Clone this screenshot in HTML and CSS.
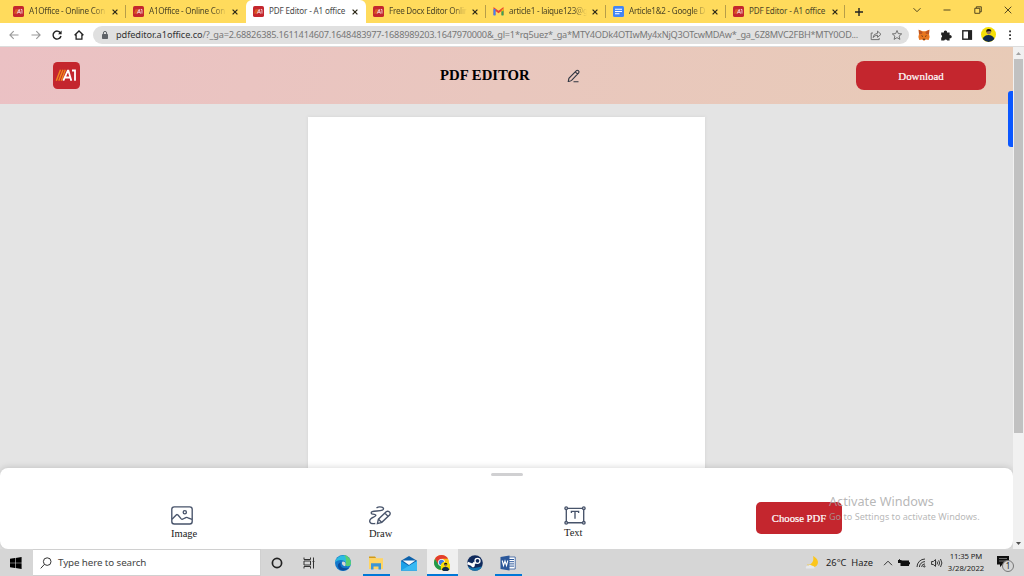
FILE: index.html
```html
<!DOCTYPE html>
<html lang="en">
<head>
<meta charset="utf-8">
<title>PDF Editor - A1 office</title>
<link rel="stylesheet" href="styles.css">
</head>
<body>
<svg class="defs" width="0" height="0">
  <symbol id="a1" viewBox="0 0 27 27">
    <rect width="27" height="27" rx="4.5" fill="#c4262e"/>
    <path d="M3.3 18.7 7.5 7.8M5.8 18.7 10 7.8M8.3 18.7 12.3 7.8" stroke="#f08a1c" stroke-width="1.4" fill="none"/>
    <path d="M10.3 18.7 14.8 8.6H15.4L18.3 18.7M12 15.5H17.3M19 8.5H22V18.7" stroke="#fff" stroke-width="1.8" fill="none"/>
  </symbol>
  <symbol id="close" viewBox="0 0 6 6"><path d="M.6.6 5.4 5.4M5.4.6.6 5.4" stroke="#2b2718" stroke-width="1.25"/></symbol>
  <symbol id="face" viewBox="0 0 14 14">
    <circle cx="7" cy="7" r="7" fill="#f4de08"/>
    <path d="M1.6 11.3Q3 7.5 7 7.5t5.5 3.8A7 7 0 0 1 1.6 11.3Z" fill="#10284c"/>
    <circle cx="7.2" cy="5" r="2" fill="#9b765a"/><path d="M5 5Q4.500 1.700 7.3 1.900T9.500 4.6L8.6 3.800 6.200 4Z" fill="#111"/>
  </symbol>
</svg>
<div class="screen">
  <div class="tabs">
    <div class="tab"><svg class="fav"><use href="#a1"/></svg><span class="title fade">A1Office - Online Con</span><svg class="x"><use href="#close"/></svg></div>
    <div class="tab sep"><svg class="fav"><use href="#a1"/></svg><span class="title fade">A1Office - Online Con</span><svg class="x"><use href="#close"/></svg></div>
    <div class="tab active"><svg class="fav"><use href="#a1"/></svg><span class="title">PDF Editor - A1 office</span><svg class="x"><use href="#close"/></svg></div>
    <div class="tab"><svg class="fav"><use href="#a1"/></svg><span class="title fade">Free Docx Editor Onlin</span><svg class="x"><use href="#close"/></svg></div>
    <div class="tab sep"><svg class="fav" viewBox="0 0 22 22"><path d="M3 18V6l8 6 8-6v12" fill="none" stroke="#ea4335" stroke-width="4"/><path d="M3 19V6" stroke="#4285f4" stroke-width="4"/><path d="M19 19V9" stroke="#34a853" stroke-width="4"/><path d="M17 8l4-3v4l-4 3Z" fill="#fbbc04"/></svg><span class="title fade">article1 - laique123@g</span><svg class="x"><use href="#close"/></svg></div>
    <div class="tab sep"><svg class="fav" viewBox="0 0 22 22"><rect width="22" height="22" rx="3" fill="#4285f4"/><path d="M4 6.5h14M4 11h14M4 15.5h9" stroke="#fff" stroke-width="2"/></svg><span class="title fade">Article1&amp;2 - Google D</span><svg class="x"><use href="#close"/></svg></div>
    <div class="tab sep"><svg class="fav"><use href="#a1"/></svg><span class="title">PDF Editor - A1 office</span><svg class="x"><use href="#close"/></svg></div>
    <div class="newtab"><svg width="8" height="8" viewBox="0 0 8 8"><path d="M4 0v8M0 4h8" stroke="#222" stroke-width="1.4"/></svg></div>
    <div class="winbtns">
      <svg viewBox="0 0 10 10"><path d="M1.5 3.2 5 6.7 8.5 3.2"/></svg>
      <svg viewBox="0 0 10 10"><path d="M1.5 5h7"/></svg>
      <svg viewBox="0 0 10 10"><path d="M1.8 3.3h5v5h-5ZM3.3 3V1.8h5v5H7"/></svg>
      <svg viewBox="0 0 10 10"><path d="M1.7 1.7l6.6 6.6M8.3 1.7 1.7 8.3"/></svg>
    </div>
  </div>

  <div class="toolbar">
    <div class="nav">
      <svg class="dim" viewBox="0 0 12 12"><path d="M10.5 6H2M5.7 2.2 1.9 6l3.8 3.8"/></svg>
      <svg class="dim" viewBox="0 0 12 12"><path d="M1.5 6H10M6.3 2.2 10.1 6 6.3 9.8"/></svg>
      <svg viewBox="0 0 12 12"><path d="M9.4 3.8A4 4 0 1 0 10 7" stroke-width="1.4"/><path d="M10.6 1.6v3.6H7Z" fill="#222" stroke="none"/></svg>
      <svg viewBox="0 0 12 12"><path d="M1.6 6.2 6 2l4.4 4.2M3.1 5.4v4.8h5.8V5.4" stroke-width="1.3"/></svg>
    </div>
    <div class="url">
      <svg class="lock" viewBox="0 0 6 8"><rect y="3" width="6" height="5" rx=".7" fill="#5f6368"/><path d="M1.4 3.4V2a1.6 1.6 0 0 1 3.2 0v1.4" fill="none" stroke="#5f6368"/></svg>
      <span class="addr"><b>pdfeditor.a1office.co</b>/?_ga=2.68826385.1611414607.1648483977-1688989203.1647970000&amp;_gl=1*rq5uez*_ga*MTY4ODk4OTIwMy4xNjQ3OTcwMDAw*_ga_6Z8MVC2FBH*MTY0OD...</span>
      <svg class="act" viewBox="0 0 12 12"><path d="M3 4H1.2v6.6h8V9M3 8.5Q3.5 4.6 7.5 4.3V2.1L11 5.3 7.5 8.3V6.2Q5 6.2 3 8.5Z"/></svg>
      <svg class="act star" viewBox="0 0 12 12"><path d="M6 1.5 7.3 4.6 10.7 4.9 8.1 7.1 8.9 10.4 6 8.6 3.1 10.4 3.9 7.1 1.3 4.9 4.7 4.6Z"/></svg>
    </div>
    <div class="exts">
      <svg viewBox="0 0 12 12"><path d="M.7.7 4.6 2.2h2.8L11.3.7 11 5l.6 3-.9 3-3-.6-1 1H5.3l-1-1-3 .6-.9-3L1 5Z" fill="#e8761f"/><path d="M3 6.2 5 7 4.5 8ZM9 6.2 7 7 7.5 8ZM4.8 9.7h2.4v1H4.8Z" fill="#51301c"/><path d="M.7.7 4.6 3 4 5 1 5ZM11.3.7 7.4 3 8 5 11 5Z" fill="#bd5522"/></svg>
      <svg viewBox="0 0 12 12"><path d="M1.2 3.5h2.7a1.6 1.6 0 1 1 3.1 0h2.6v2.7a1.6 1.6 0 1 1 0 3v2.3H7.2a1.6 1.6 0 0 0-3 0h-3V8.8a1.6 1.6 0 0 0 0-2.9Z" fill="#222"/></svg>
      <svg viewBox="0 0 12 12"><rect x="1.8" y="1.8" width="8.6" height="8.4" fill="none" stroke="#222" stroke-width="1.4"/><path d="M7 2h3.3v8H7Z" fill="#222"/></svg>
      <svg class="avatar"><use href="#face"/></svg>
      <svg viewBox="0 0 12 12"><path d="M5.2 1.5h1.7v1.7H5.2ZM5.2 5.2h1.7v1.7H5.2ZM5.2 8.9h1.7v1.7H5.2Z" fill="#222"/></svg>
    </div>
  </div>

  <div class="viewport">
    <div class="page">
      <header class="head">
        <svg class="logo"><use href="#a1"/></svg>
        <h1>PDF EDITOR</h1>
        <svg class="pencil" viewBox="0 0 14 14"><path d="M1.3 12.4 1.9 9.3 9.2 1.8Q10.2.8 11.4 1.7 12.6 2.8 11.7 4L4.6 11.4Q3.2 12.5 1.3 12.4ZM8.2 2.9l2.5 2.3M6.500 12.700h5" fill="none" stroke="#303642" stroke-width="1.1"/></svg>
        <button class="btn download">Download</button>
      </header>
      <main class="work"><div class="sheet"></div></main>
      <div class="feedback"></div>
      <section class="panel">
        <div class="grip"></div>
        <div class="tools">
          <div class="tool image"><svg viewBox="0 0 22 19"><rect x=".8" y=".8" width="20.4" height="17.2" rx="2.5"/><path d="M1 13.2 5.2 9Q6.2 8 7.2 9.2L10 12.6Q11 13.7 12 13L14.8 11.6Q16 11 17 11.8L21 13.3"/><circle cx="13.8" cy="6.2" r="1.6"/></svg><span>Image</span></div>
          <div class="tool draw"><svg viewBox="0 0 22 19"><path d="M7.5 1.8Q10 .3 12.8 1.2 16 2.4 13.3 4.2C10.5 5.4 6 4.6 3.2 5.6 1.5 6.5 2.2 8 4 8.2 7 8.5 8 9.4 5 10.9 1.5 12.5.2 13.7.8 15.7 1.4 17.8 4 17.9 6.3 17.5M8.4 17.6 9.4 13.2 17.2 5.8Q18.6 4.7 20.2 5.8T20.8 8.8L12.8 16.3ZM16 7.2l3.1 3.2M9.5 13.3l3.1 3"/></svg><span>Draw</span></div>
          <div class="tool text"><svg viewBox="0 0 22 19"><path d="M3 2.3h16M3 16.7h16M2.3 3v13M19.7 3v13M7.4 7V5.4h7.2V7M11 5.4v7.4"/><circle cx="2.2" cy="2.2" r="1.3"/><circle cx="19.8" cy="2.2" r="1.3"/><circle cx="2.2" cy="16.8" r="1.3"/><circle cx="19.8" cy="16.8" r="1.3"/></svg><span>Text</span></div>
          <button class="btn choose">Choose PDF</button>
        </div>
      </section>
      <div class="watermark"><p class="w1">Activate Windows</p><p class="w2">Go to Settings to activate Windows.</p></div>
    </div>
    <div class="scroll">
      <svg width="7" height="4" viewBox="0 0 7 4"><path d="M1 4 3.5 1 6 4Z" fill="#a3a3a3"/></svg>
      <div class="thumb"></div>
      <svg class="down" width="7" height="4" viewBox="0 0 7 4"><path d="M1 0 3.5 3 6 0Z" fill="#505050"/></svg>
    </div>
  </div>

  <div class="taskbar">
    <div class="start"><svg width="12" height="12" viewBox="0 0 12 12"><path d="M0 1.7 5 1V5.7H0ZM5.6.9 11.6 0V5.7H5.6ZM0 6.3H5V11L0 10.3ZM5.6 6.3H11.6V12L5.6 11.1Z"/></svg></div>
    <div class="search"><svg width="12" height="12" viewBox="0 0 12 12"><circle cx="7.2" cy="4.6" r="3.8"/><path d="M4.4 7.4.7 11.4"/></svg><span>Type here to search</span></div>
    <div class="apps">
      <div class="app"><svg viewBox="0 0 16 16"><circle cx="8" cy="8" r="4.6" fill="none" stroke="#222" stroke-width="1.7"/></svg></div>
      <div class="app view"><svg viewBox="0 0 16 16"><path d="M3 2.5v2h6.5v-2M3 13.5v-2h6.5v2M3 6h6.5v4H3ZM12.5 2.5v11M11.6 6.5h1.8" fill="none" stroke="#333" stroke-width="1"/></svg></div>
      <div class="app"><svg viewBox="0 0 16 16"><circle cx="8" cy="8" r="8" fill="#1478cb"/><path d="M.1 7.4A8 8 0 0 1 16 8c.1 3-3 3.8-5.4 2.8-1-.6.4-1.1.2-2.7C10.3 5 4 3.6.1 7.4Z" fill="#2bbce0"/><path d="M9 .1A8 8 0 0 1 16 8c.1 3-3 3.8-5.4 2.8-1-.6.4-1.1.2-2.7C10.5 5.5 12 3 9 .1Z" fill="#58cf70"/><path d="M6 7.5C4 11 7.5 14.7 13.8 12.7 11 16.5 4 16.5 3 11.5 2.6 9 4 7.6 6 7.5Z" fill="#0b4c9c"/><path d="M7.8 6.6c2 0 3 1.3 2.8 2.6-.5 1-.8 1.3 0 1.9-3 .4-4.9-3-2.8-4.5Z" fill="#d6d6d6"/></svg></div>
      <div class="app open"><svg viewBox="0 0 16 16"><path d="M1 1.5h6l1.3 1.8H1Z" fill="#d39b16"/><path d="M1 3.2h14V14H1Z" fill="#ffd563"/><path d="M3 14.5V8.3h10v6.2h-2.5v-3h-5v3Z" fill="#3c95d6"/></svg></div>
      <div class="app"><svg viewBox="0 0 16 16"><path d="M0 5.8 8 1l8 4.8V15.5H0Z" fill="#0d62ab"/><path d="M1.5 5.5h13L8 10Z" fill="#f2f7fb"/><path d="M0 6 8 11 16 6v9.5H0Z" fill="#1ba1e8"/><path d="M0 15.5 8 10.8 16 6v9.5Z" fill="#38b9f3"/></svg></div>
      <div class="app open current"><svg viewBox="0 0 16 16"><circle cx="7.5" cy="7.5" r="7.5" fill="#fbc116"/><path d="M1 3.8A7.5 7.5 0 0 1 14 3.8H7.5L4.3 9.4Z" fill="#e33b2e"/><path d="M1 3.8 4.3 9.3 7.5 11 6.7 15A7.5 7.5 0 0 1 1 3.8Z" fill="#229a4c"/><circle cx="7.5" cy="7.5" r="3.5" fill="#fff"/><circle cx="7.5" cy="7.5" r="2.7" fill="#3b7de9"/><use href="#face" x="6.5" y="6.5" width="10" height="10"/></svg></div>
      <div class="app"><svg viewBox="0 0 16 16"><circle cx="8" cy="8" r="7.8" fill="#102a5c"/><path d="M1 11.5 6 13.3 15 11.5A7.8 7.8 0 0 1 1 11.5Z" fill="#1675ae"/><path d="M.5 8 5.5 10 8 7.5" stroke="#fff" stroke-width="2.5" fill="none"/><circle cx="10.5" cy="5.8" r="2.5" fill="#102a5c" stroke="#fff" stroke-width="1.3"/><circle cx="6" cy="10.6" r="1.8" fill="#fff"/></svg></div>
      <div class="app open"><svg viewBox="0 0 16 16"><path d="M8 2h7.2v12H8Z" fill="#fff" stroke="#2b579a" stroke-width=".8"/><path d="M9 4.5h5M9 6.7h5M9 8.9h5M9 11.1h5" stroke="#2b579a"/><path d="M.5 2 9.5.5v15L.5 14Z" fill="#2b579a"/><path d="M2.2 5.5 3.5 10.5 5 6 6.5 10.5 7.8 5.5" fill="none" stroke="#fff" stroke-width="1.1"/></svg></div>
    </div>
    <div class="tray">
      <svg class="moon" width="15" height="13" viewBox="0 0 15 13"><path d="M8 0C13 2 15 8 10.5 10.5 7 12 3.5 10.8 2 8.500 6.500 9.500 9.500 5 8 0Z" fill="#fbc61c"/><path d="M1 12.4Q.2 10 3 9.7 5 7.7 7 9.7 9.5 9.5 9.5 12.4Z" fill="#e6e8ec"/></svg>
      <span class="temp">26°C&nbsp; Haze</span>
      <svg class="chev" width="10" height="6" viewBox="0 0 10 6"><path d="M1 5.2 5 1.2 9 5.2"/></svg>
      <svg class="bat" width="12" height="8" viewBox="0 0 12 8"><path d="M2.5 1.500H11v5.500H2.5ZM11 3.2h1v2h-1ZM0 1h3.5v3H0ZM1 0h.8v2H1Z" fill="#111"/></svg>
      <svg class="wifi" width="10" height="10" viewBox="0 0 10 10"><path d="M1 9A8 8 0 0 1 9 1M3.4 9A5.6 5.6 0 0 1 9 3.6M5.6 9A3.4 3.4 0 0 1 9 5.9"/><circle cx="8.3" cy="8.4" r=".7"/></svg>
      <svg class="vol" width="12" height="10" viewBox="0 0 12 10"><path d="M.6 3.5h1.7L4.5 1.6v6.8L2.3 6.5H.6ZM6 3.5Q7 5 6 6.5M7.7 2.3Q9.5 5 7.7 7.7M9.5 1Q12.3 5 9.5 9"/></svg>
      <div class="clock"><span class="time">11:35 PM</span><span>3/28/2022</span></div>
      <div class="note"><svg width="12" height="11" viewBox="0 0 12 11"><path d="M0 0h12v8.5H5.5L3 11V8.5H0Z" fill="#111"/><path d="M2 2.5h8M2 5h8" stroke="#999" stroke-width=".7"/></svg><span class="count">1</span></div>
    </div>
  </div>
</div>
</body>
</html>
```

FILE: styles.css
```css
* { box-sizing: border-box; }
body { margin: 0; overflow: hidden; font-family: "Noto Sans", "Open Sans", sans-serif; }
.defs { position: absolute; }
.screen { width: 1024px; height: 576px; display: flex; flex-direction: column; }
p, h1 { margin: 0; }
svg { display: block; flex: none; }

.tabs { height: 23px; background: #ffdb5c; display: flex; padding-left: 5px; }
.tab { width: 120px; height: 23px; display: flex; align-items: center; padding: 0 8px; position: relative; flex: none; }
.tab.sep::before { content: ""; position: absolute; left: 0; top: 5px; width: 1px; height: 13px; background: #b79e48; }
.tab.active { background: #fff; border-radius: 6px 6px 0 0; margin-left: 1px; margin-right: -1px; padding-left: 7px; }
.fav { width: 11px; height: 11px; margin-right: 5px; }
.title { width: 78px; flex: none; height: 13px; line-height: 12px; font-size: 8.1px; color: #4e4727; white-space: nowrap; letter-spacing: -.16px; }
.fade { letter-spacing: -.25px; -webkit-mask-image: linear-gradient(90deg, #000 82%, transparent); mask-image: linear-gradient(90deg, #000 82%, transparent); }
.active .title { color: #4a4a4a; }
.x { width: 6px; height: 6px; margin-left: 5px; }
.newtab { width: 28px; display: flex; align-items: center; padding-left: 10px; border-left: 1px solid #b79e48; height: 13px; margin: 5px 0 0 -1px; }
.winbtns { margin-left: auto; display: flex; gap: 20.5px; padding: 5px 11px 0 0; }
.winbtns svg { width: 10px; height: 10px; fill: none; stroke: #42391b; stroke-width: .9; }

.toolbar { height: 24px; background: #fff; border-bottom: 1px solid #dcdcdc; display: flex; align-items: center; padding: 0 8px; }
.nav { display: flex; gap: 9.5px; width: 85px; }
.nav svg { width: 12px; height: 12px; fill: none; stroke: #222; stroke-width: 1.1; }
.nav .dim { stroke: #999; }
.url { width: 816px; height: 18px; border-radius: 9px; background: #e0e0e0; display: flex; align-items: center; padding-left: 9px; }
.lock { width: 6px; height: 8px; margin-right: 8px; }
.addr { width: 754px; flex: none; font-size: 9.2px; color: #777; white-space: nowrap; line-height: 16px; letter-spacing: -.225px; }
.addr b { font-weight: 400; color: #333; letter-spacing: -.07px; }
.act { width: 12px; height: 12px; fill: none; stroke: #666; stroke-width: .9; }
.star { margin-left: 9px; }
.exts { display: flex; align-items: center; margin-left: 9px; gap: 9.5px; }
.exts svg { width: 12px; height: 12px; }
.exts .avatar { width: 15px; height: 15px; margin: 0 -1.5px; }

.viewport { height: 502px; display: flex; }
.page { width: 1013px; height: 502px; background: #e4e4e4; position: relative; overflow: hidden; }
.head { height: 57px; display: flex; align-items: center; padding-left: 53px; background: linear-gradient(105deg, #ebc1c4, #e9c7be 50%, #e8cbb7); }
.logo { width: 27px; height: 27px; }
h1 { font: bold 14.75px "Liberation Serif", serif; margin-left: 360px; width: 127px; white-space: nowrap; }
.pencil { width: 14px; height: 14px; }
.btn { border: 0; padding: 0; background: #c4262e; color: #fff; font: 10.9px "Liberation Serif", serif; -webkit-text-stroke: .2px #fff; white-space: nowrap; }
.download { width: 130px; height: 29px; border-radius: 8px; margin-left: 275px; }
.work { padding: 13px 0 0 308px; }
.sheet { width: 397px; height: 440px; background: #fff; box-shadow: 0 0 3px #d2d2d2; }
.feedback { position: absolute; right: 0; top: 44px; width: 5px; height: 56px; background: #0b57ff; border-radius: 3px 0 0 3px; }
.panel { position: absolute; left: 0; right: 0; bottom: 0; height: 81px; background: #fff; border-radius: 8px; box-shadow: 0 0 7px rgba(0,0,0,.18); display: flex; flex-direction: column; }
.grip { width: 32px; height: 3px; border-radius: 2px; background: #d0d0d2; margin: 5px 0 0 490.5px; }
.tools { display: flex; padding: 26px 0 0 171px; }
.tool { display: flex; flex-direction: column; align-items: flex-start; height: 40px; margin-top: 4px; font: 10.5px/12px "Liberation Serif", serif; color: #222; }
.tool svg { width: 22px; height: 19px; fill: none; stroke: #47536a; stroke-width: 1.35; margin-bottom: 3px; }
.image { width: 198px; }
.draw { width: 195px; }
.draw svg, .text svg { margin-left: -.5px; }
.text { width: 192px; }
.text span { margin-top: -1px; }
.choose { width: 86px; height: 32px; border-radius: 5px; font-size: 10.7px; }
.watermark { position: absolute; left: 829px; top: 445px; color: rgba(165,165,165,.8); white-space: nowrap; }
.w1 { font-size: 12.7px; line-height: 18px; }
.w2 { font-size: 9.1px; line-height: 13px; }
.scroll { width: 11px; background: #f1f1f1; display: flex; flex-direction: column; align-items: center; padding-top: 4px; }
.thumb { width: 9px; height: 374px; background: #c1c1c1; margin-top: 4px; }
.down { margin-top: 109px; }

.taskbar { height: 27px; background: #d6d6d6; display: flex; }
.start { width: 33px; padding: 8px 0 0 10px; }
.search { width: 228px; background: #fff; border: 1px solid #d0d0d0; border-left: 0; display: flex; align-items: center; padding-left: 7px; font-size: 9.8px; letter-spacing: -.1px; color: #444; white-space: nowrap; }
.search svg { margin-right: 6px; fill: none; stroke: #333; }
.apps { display: flex; }
.app { width: 33px; height: 27px; display: flex; align-items: center; justify-content: center; }
.app svg { width: 16px; height: 16px; margin-left: -1px; }
.view { padding-right: 2px; }
.open { background: linear-gradient(#0078d7, #0078d7) center bottom / 27px 2px no-repeat; }
.current { background: linear-gradient(#0078d7, #0078d7) center bottom / 31px 2px no-repeat, linear-gradient(#efefef, #efefef) center / 31px 27px no-repeat; }
.tray { display: flex; align-items: center; margin-left: auto; width: 219px; font-size: 9.3px; color: #222; white-space: nowrap; }
.temp { width: 50px; margin-left: 6px; }
.chev { margin-left: 7px; }
.chev, .wifi, .vol { fill: none; stroke: #222; stroke-width: .9; }
.bat { margin-left: 5px; }
.wifi { margin-left: 6px; }
.vol { margin-left: 5px; }
.clock { display: flex; flex-direction: column; align-items: center; width: 38px; margin: 0 0 1px 4px; font-size: 7.7px; line-height: 12px; }
.time { letter-spacing: -.1px; }
.note { margin-left: 12px; position: relative; margin-bottom: 3px; }
.count { position: absolute; left: 5px; top: 4px; width: 12px; height: 12px; border-radius: 50%; border: 1px solid #777; background: #d6d6d6; font-size: 8px; line-height: 10px; text-align: center; }
```
